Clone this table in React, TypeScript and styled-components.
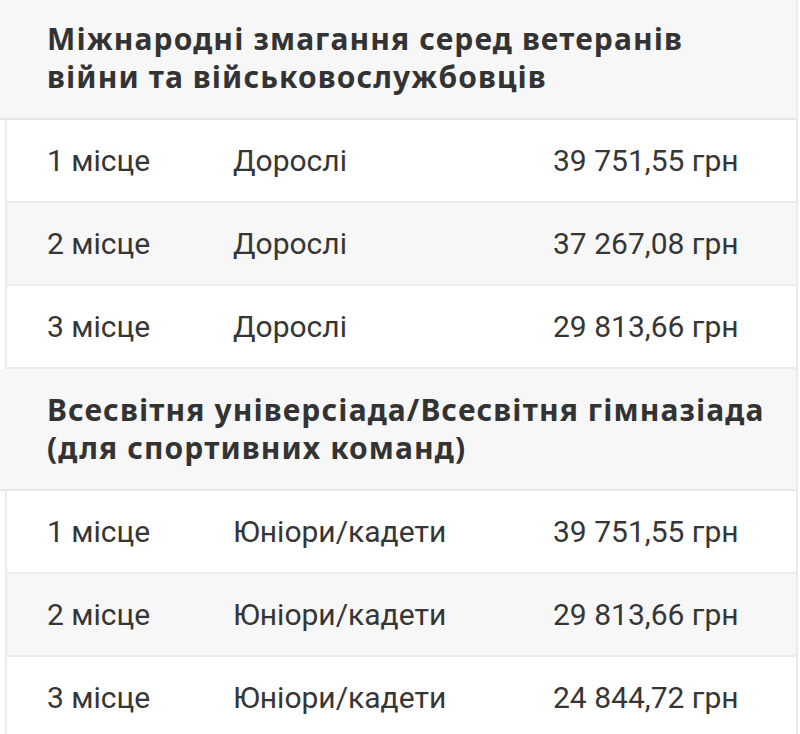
import React from "react";
import styled, { createGlobalStyle } from "styled-components";

const GlobalStyle = createGlobalStyle`
  html, body {
    margin: 0;
    padding: 0;
    background: #ffffff;
  }
  body {
    font-family: "Roboto", "Noto Sans", sans-serif;
    color: #383838;
  }
`;

const Page = styled.div`
  width: 800px;
  height: 734px;
  overflow: hidden;
  background: #ffffff;
`;

const Table = styled.div`
  margin: -2px 2px 0 5px;
  border-left: 2px solid #ebebeb;
  border-right: 2px solid #ebebeb;
  display: flex;
  flex-direction: column;
`;

const SectionHeader = styled.div`
  background: #f7f7f7;
  border-bottom: 2px solid #e6e6e6;
  padding: 22px 21px 22px 47px;
  margin-left: -7px;
  font-family: "Noto Sans", sans-serif;
  font-weight: 700;
  font-size: 30px;
  line-height: 38px;
  letter-spacing: 1.1px;
  color: #333333;
  height: 76px;
`;

const Row = styled.div<{ $striped: boolean }>`
  display: grid;
  grid-template-columns: 186px 320px 1fr;
  align-items: center;
  height: 81px;
  padding-left: 40px;
  background: ${(p) => (p.$striped ? "#f7f7f7" : "#ffffff")};
  border-bottom: 2px solid #ebebeb;
  font-size: 30px;
  color: #363636;
`;

const Cell = styled.div`
  white-space: nowrap;
`;

type Entry = { place: string; group: string; amount: string };
type Section = { title: string; rows: Entry[] };

const sections: Section[] = [
  {
    title: "Міжнародні змагання серед ветеранів війни та військовослужбовців",
    rows: [
      { place: "1 місце", group: "Дорослі", amount: "39 751,55 грн" },
      { place: "2 місце", group: "Дорослі", amount: "37 267,08 грн" },
      { place: "3 місце", group: "Дорослі", amount: "29 813,66 грн" },
    ],
  },
  {
    title: "Всесвітня універсіада/Всесвітня гімназіада (для спортивних команд)",
    rows: [
      { place: "1 місце", group: "Юніори/кадети", amount: "39 751,55 грн" },
      { place: "2 місце", group: "Юніори/кадети", amount: "29 813,66 грн" },
      { place: "3 місце", group: "Юніори/кадети", amount: "24 844,72 грн" },
    ],
  },
];

export default function App() {
  return (
    <Page>
      <GlobalStyle />
      <Table>
        {sections.map((s) => (
          <React.Fragment key={s.title}>
            <SectionHeader>{s.title}</SectionHeader>
            {s.rows.map((r, i) => (
              <Row key={r.place} $striped={i % 2 === 1}>
                <Cell>{r.place}</Cell>
                <Cell>{r.group}</Cell>
                <Cell>{r.amount}</Cell>
              </Row>
            ))}
          </React.Fragment>
        ))}
      </Table>
    </Page>
  );
}
